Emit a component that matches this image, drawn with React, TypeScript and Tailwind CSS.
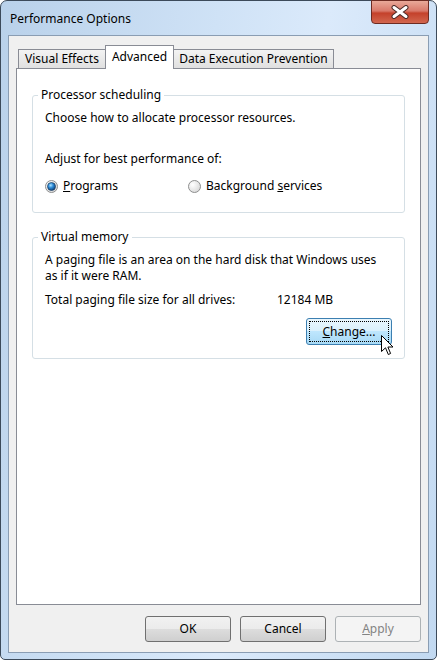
import type { ReactNode } from 'react'

const font = { fontFamily: '"Segoe UI", "Noto Sans", sans-serif' }

function Radio({ checked }: { checked?: boolean }) {
  return (
    <svg width="13" height="13" viewBox="0 0 13 13" aria-hidden>
      <defs>
        <radialGradient id="rg-off" cx="0.35" cy="0.35" r="0.8">
          <stop offset="0" stopColor="#ffffff" />
          <stop offset="1" stopColor="#d4d4d4" />
        </radialGradient>
        <radialGradient id="rg-on" cx="0.4" cy="0.35" r="0.7">
          <stop offset="0" stopColor="#aee3ff" />
          <stop offset="0.45" stopColor="#2b8ad6" />
          <stop offset="1" stopColor="#0b386e" />
        </radialGradient>
      </defs>
      <circle cx="6.5" cy="6.5" r="6" fill="url(#rg-off)" stroke="#8e8f8f" />
      {checked && <circle cx="6.5" cy="6.5" r="4" fill="url(#rg-on)" stroke="#1d3d5e" strokeWidth="0.7" />}
    </svg>
  )
}

function Group({ title, children, className }: { title: string; children: ReactNode; className?: string }) {
  return (
    <fieldset className={`border border-[#d5dfe5] rounded-[3px] ${className ?? ''}`}>
      <legend className="ml-[5px] px-[3px] leading-[16px]">{title}</legend>
      <div className="px-[12px]">{children}</div>
    </fieldset>
  )
}

function Button({ children, disabled }: { children: ReactNode; disabled?: boolean }) {
  return (
    <button
      className={`w-[86px] h-[26px] rounded-[3px] border leading-none ${
        disabled
          ? 'border-[#adb2b5] bg-[#f4f4f4] text-[#838383]'
          : 'border-[#707070] bg-[linear-gradient(#f2f2f2_0%,#ebebeb_50%,#dddddd_50%,#cfcfcf_100%)] text-black'
      }`}
    >
      {children}
    </button>
  )
}

export default function App() {
  return (
    <div className="w-[437px] h-[660px] bg-white text-[12px] text-black" style={font}>
      <div className="relative w-[437px] h-[660px] rounded-t-[7px] rounded-b-[5px] border border-[#3c4a5a] bg-[linear-gradient(100deg,#b9d1ea_0%,#cfe2f6_40%,#dbeafb_60%,#c2d9f1_100%)] flex flex-col">
        {/* title bar */}
        <div className="h-[34px] flex items-start pl-[9px] pt-[10px]">
          <span className="leading-[16px]">Performance Options</span>
        </div>
        <div className="absolute right-[7px] top-[-1px] w-[58px] h-[24px] rounded-b-[4px] border border-[#6d2b22] bg-[linear-gradient(#e9a999_0%,#d9796a_45%,#c4412b_55%,#d2674f_100%)] flex items-center justify-center">
          <svg width="20" height="14" viewBox="0 0 20 14" aria-hidden>
            <path d="M4 2.5 L16 11.5 M16 2.5 L4 11.5" stroke="#4a2a26" strokeWidth="5" strokeLinecap="round" />
            <path d="M4 2.5 L16 11.5 M16 2.5 L4 11.5" stroke="#ffffff" strokeWidth="3" strokeLinecap="round" />
          </svg>
        </div>

        {/* client area */}
        <div className="mx-[7px] h-[618px] border border-[#8a9db3] bg-[#f0f0f0] flex flex-col pt-[8px] px-[7px] pb-[10px]">
          <div className="flex items-end pl-[2px] h-[24px] relative z-10">
            <div className="h-[19px] px-[6px] border border-b-0 border-[#898c95] bg-[linear-gradient(#f3f3f3,#e0e0e0)] flex items-center">
              Visual Effects
            </div>
            <div className="h-[24px] -mb-px px-[6px] border border-b-0 border-[#898c95] bg-white flex items-start pt-[2px] -ml-px">
              Advanced
            </div>
            <div className="h-[19px] px-[5px] border border-b-0 border-l-0 border-[#898c95] bg-[linear-gradient(#f3f3f3,#e0e0e0)] flex items-center">
              Data Execution Prevention
            </div>
          </div>
          <div className="flex-1 border border-[#898c95] bg-white px-[15px] pt-[18px]">
            <Group title="Processor scheduling" className="h-[126px]">
              <p className="leading-[16px] mt-[7px]">Choose how to allocate processor resources.</p>
              <p className="leading-[16px] mt-[25px]">Adjust for best performance of:</p>
              <div className="flex items-center mt-[11px] h-[16px]">
                <div className="flex items-center gap-[5px] w-[143px]">
                  <Radio checked />
                  <span>
                    <span className="underline">P</span>rograms
                  </span>
                </div>
                <div className="flex items-center gap-[5px]">
                  <Radio />
                  <span>
                    Background <span className="underline">s</span>ervices
                  </span>
                </div>
              </div>
            </Group>

            <Group title="Virtual memory" className="mt-[16px] h-[130px]">
              <p className="leading-[16px] mt-[7px] max-w-[345px]">
                A paging file is an area on the hard disk that Windows uses as if it were RAM.
              </p>
              <div className="flex mt-[8px] leading-[16px]">
                <span className="w-[232px]">Total paging file size for all drives:</span>
                <span>12184 MB</span>
              </div>
              <div className="flex justify-end mt-[10px] relative">
                <button className="w-[86px] h-[27px] rounded-[3px] border border-[#3c7fb1] bg-[linear-gradient(#eaf6fd_0%,#d9f0fc_50%,#bee6fd_50%,#a7d9f5_100%)] p-[2px]">
                  <span className="flex items-center justify-center w-full h-full border border-dotted border-black">
                    <span>
                      <span className="underline">C</span>hange...
                    </span>
                  </span>
                </button>
                <svg
                  className="absolute right-[-2px] top-[17px]"
                  width="13"
                  height="21"
                  viewBox="0 0 13 21"
                  aria-hidden
                >
                  <path
                    d="M0.5 0.5 L0.5 16.5 L4.5 12.8 L7.3 19.5 L9.6 18.5 L6.9 12 L12 12 Z"
                    fill="#ffffff"
                    stroke="#000000"
                    strokeWidth="1"
                    strokeLinejoin="round"
                  />
                </svg>
              </div>
            </Group>
          </div>

          <div className="flex justify-end gap-[9px] mt-[11px]">
            <Button>OK</Button>
            <Button>Cancel</Button>
            <Button disabled>
              <span className="underline">A</span>pply
            </Button>
          </div>
        </div>
      </div>
    </div>
  )
}
